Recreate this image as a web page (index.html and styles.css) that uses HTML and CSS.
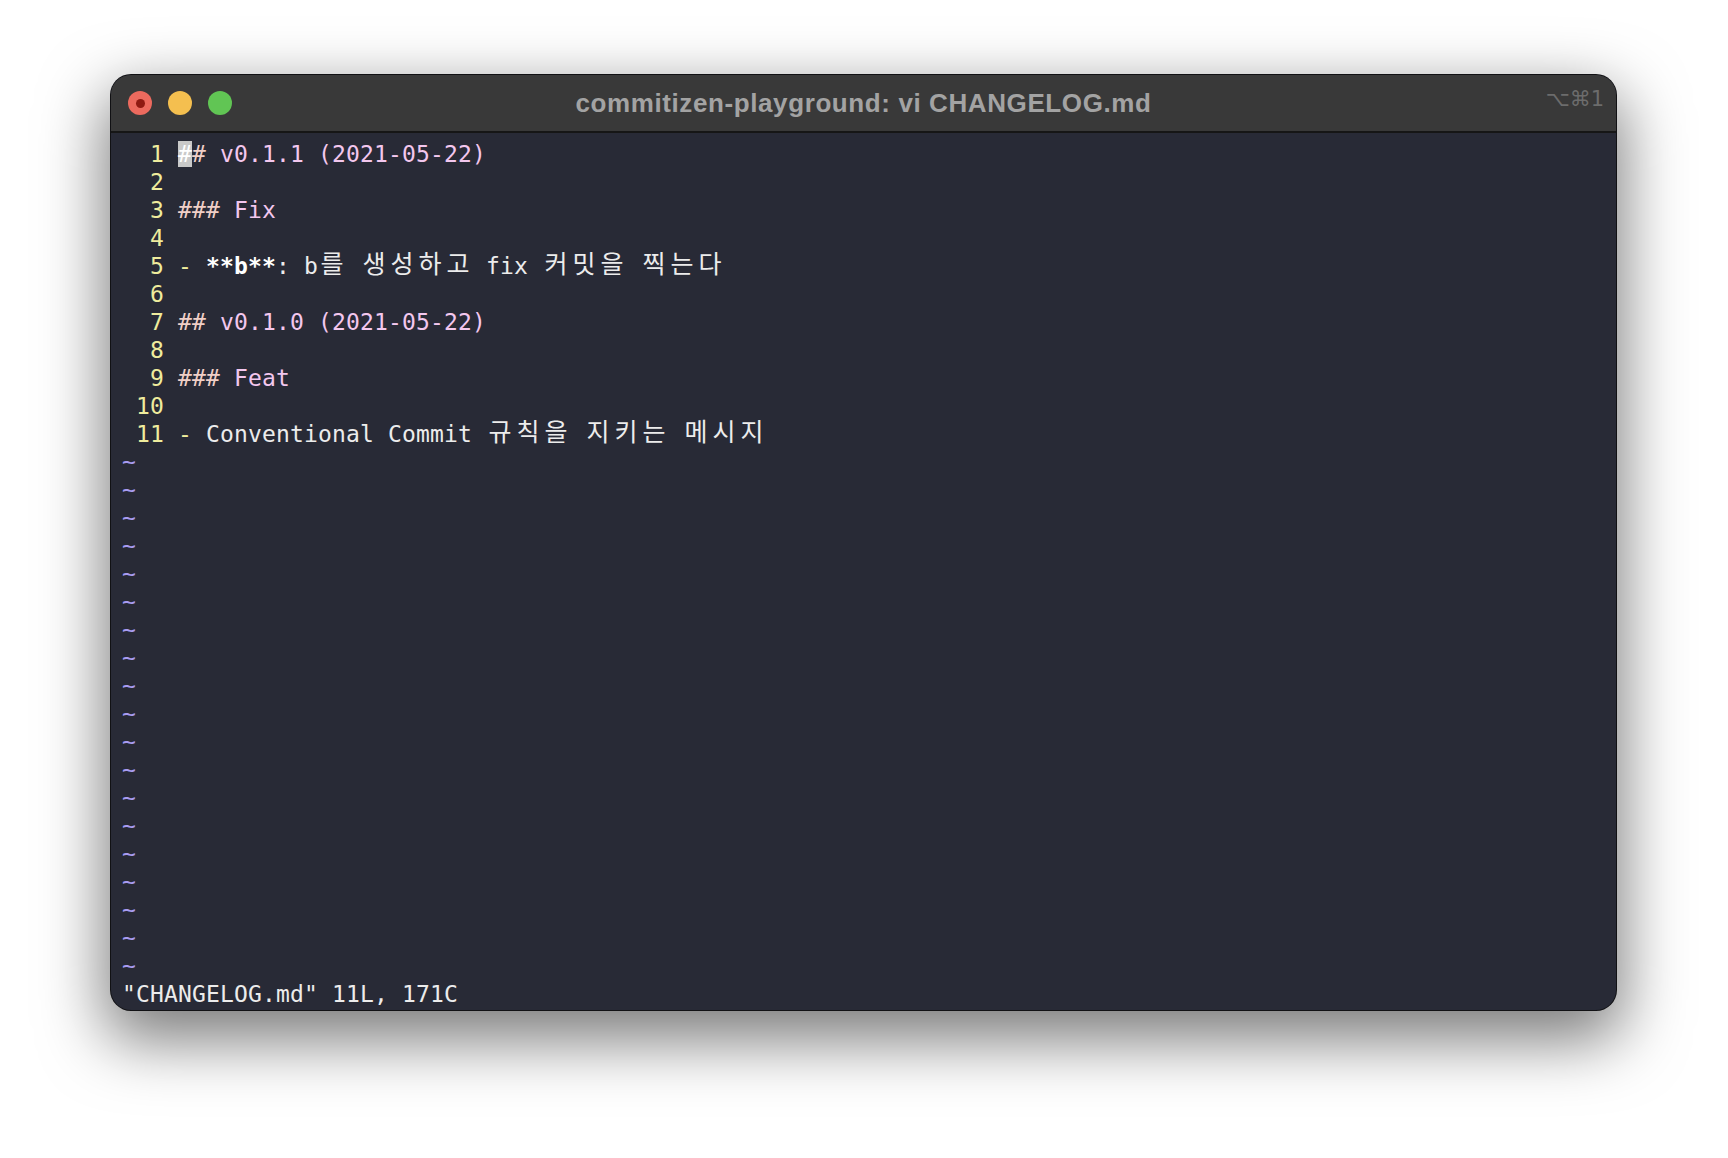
FILE: index.html
```html
<!DOCTYPE html>
<html lang="ko">
<head>
<meta charset="utf-8">
<title>vi CHANGELOG.md</title>
<link rel="stylesheet" href="styles.css">
</head>
<body>
<div class="window">
  <div class="titlebar">
    <div class="lights">
      <span class="light red"><span class="dot"></span></span>
      <span class="light yellow"></span>
      <span class="light green"></span>
    </div>
    <div class="title">commitizen-playground: vi CHANGELOG.md</div>
    <div class="shortcut">⌥⌘1</div>
  </div>
  <div class="term">
    <div class="row"><span class="ln">  1 </span><span class="cursor">#</span><span class="mk">#</span><span class="hd"> v0.1.1 (2021-05-22)</span></div>
    <div class="row"><span class="ln">  2 </span></div>
    <div class="row"><span class="ln">  3 </span><span class="mk">###</span><span class="hd"> Fix</span></div>
    <div class="row"><span class="ln">  4 </span></div>
    <div class="row"><span class="ln">  5 </span><span class="dash">-</span> <b class="bold">**b**</b>: b<span class="w">를</span> <span class="w">생</span><span class="w">성</span><span class="w">하</span><span class="w">고</span> fix <span class="w">커</span><span class="w">밋</span><span class="w">을</span> <span class="w">찍</span><span class="w">는</span><span class="w">다</span></div>
    <div class="row"><span class="ln">  6 </span></div>
    <div class="row"><span class="ln">  7 </span><span class="mk">##</span><span class="hd"> v0.1.0 (2021-05-22)</span></div>
    <div class="row"><span class="ln">  8 </span></div>
    <div class="row"><span class="ln">  9 </span><span class="mk">###</span><span class="hd"> Feat</span></div>
    <div class="row"><span class="ln"> 10 </span></div>
    <div class="row"><span class="ln"> 11 </span><span class="dash">-</span> Conventional Commit <span class="w">규</span><span class="w">칙</span><span class="w">을</span> <span class="w">지</span><span class="w">키</span><span class="w">는</span> <span class="w">메</span><span class="w">시</span><span class="w">지</span></div>
    <div class="row tilde">~</div>
    <div class="row tilde">~</div>
    <div class="row tilde">~</div>
    <div class="row tilde">~</div>
    <div class="row tilde">~</div>
    <div class="row tilde">~</div>
    <div class="row tilde">~</div>
    <div class="row tilde">~</div>
    <div class="row tilde">~</div>
    <div class="row tilde">~</div>
    <div class="row tilde">~</div>
    <div class="row tilde">~</div>
    <div class="row tilde">~</div>
    <div class="row tilde">~</div>
    <div class="row tilde">~</div>
    <div class="row tilde">~</div>
    <div class="row tilde">~</div>
    <div class="row tilde">~</div>
    <div class="row tilde">~</div>
    <div class="row status">"CHANGELOG.md" 11L, 171C</div>
  </div>
</div>
</body>
</html>
```

FILE: styles.css
```css
html, body {
  margin: 0;
  padding: 0;
  background: #ffffff;
}
body {
  width: 1728px;
  height: 1158px;
  overflow: hidden;
  padding: 75px 0 0 111px;
  box-sizing: border-box;
}
.window {
  width: 1505px;
  height: 935px;
  border-radius: 20px;
  overflow: hidden;
  background: #282a36;
  box-shadow: 0 0 0 1px #111114, 0 24px 64px 6px rgba(0, 0, 0, 0.52);
  display: flex;
  flex-direction: column;
}
.titlebar {
  height: 56px;
  flex: none;
  background: #393939;
  border-bottom: 2px solid #161616;
  display: flex;
  align-items: center;
  position: relative;
}
.lights {
  display: flex;
  gap: 16px;
  padding-left: 17px;
}
.light {
  width: 24px;
  height: 24px;
  border-radius: 50%;
  display: flex;
  align-items: center;
  justify-content: center;
}
.red { background: #ec6a5e; }
.yellow { background: #f4bf4f; }
.green { background: #61c554; }
.dot {
  width: 9px;
  height: 9px;
  border-radius: 50%;
  background: #8f1a12;
}
.title {
  position: absolute;
  left: 0;
  right: 0;
  top: 0;
  bottom: 0;
  display: flex;
  align-items: center;
  justify-content: center;
  font-family: "Liberation Sans", Arial, sans-serif;
  font-weight: bold;
  font-size: 26px;
  color: #a3a3a3;
  letter-spacing: 0.6px;
}
.shortcut {
  margin-left: auto;
  padding-right: 12px;
  font-family: "DejaVu Sans", sans-serif;
  font-size: 21px;
  color: #6c6c6c;
  position: relative;
  top: -4px;
}
.term {
  flex: 1;
  padding: 7px 0 0 11px;
  font-family: "DejaVu Sans Mono", monospace;
  font-size: 23px;
  letter-spacing: 0.15px;
  color: #ececec;
}
.row {
  height: 28px;
  line-height: 28px;
  white-space: pre;
}
.ln { color: #efec9d; }
.dash { color: #efec9d; }
.mk { color: #f0cfc7; }
.hd { color: #f3c7ee; }
.cursor {
  background: #c9c9c9;
  color: #ffffff;
}
.bold {
  font-weight: bold;
  color: #ffffff;
}
.w {
  display: inline-block;
  width: 28px;
  text-align: center;
  letter-spacing: 0;
  font-family: "Noto Sans CJK KR", sans-serif;
  font-size: 25px;
  line-height: 20px;
  vertical-align: 1px;
}
.tilde {
  color: #a99cf0;
}
.status {
  color: #ececec;
}
```
